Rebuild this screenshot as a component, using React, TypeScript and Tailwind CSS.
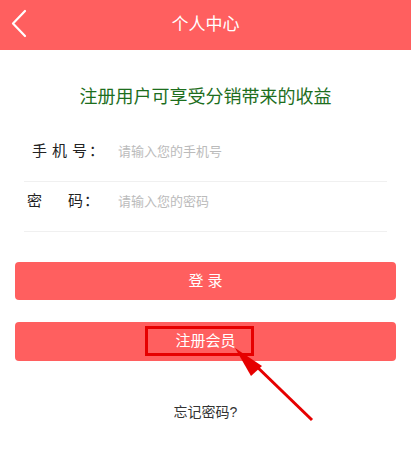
const font = {
  fontFamily: '"Liberation Sans", "Noto Sans CJK SC", sans-serif',
};

export default function App() {
  return (
    <div
      className="relative w-[411px] h-[460px] bg-white overflow-hidden"
      style={font}
    >
      {/* Header */}
      <header className="relative h-[50px] bg-[#ff5f5f] flex items-center justify-center">
        <svg
          className="absolute left-0 top-0"
          width="40"
          height="50"
          viewBox="0 0 40 50"
          fill="none"
        >
          <polyline
            points="25,11 13,23.5 25,36"
            stroke="white"
            strokeWidth="2.2"
            strokeLinecap="round"
            strokeLinejoin="round"
          />
        </svg>
        <h1 className="text-white text-[17px]">个人中心</h1>
      </header>

      {/* Subtitle */}
      <p className="mt-[36px] text-center text-[18px] leading-[22px] text-[#1d6e1d]">
        注册用户可享受分销带来的收益
      </p>

      {/* Form */}
      <div className="mt-[24px] mx-[24px]">
        <div className="h-[50px] flex items-center pb-[10px] border-b border-[#f0f0f0]">
          <div className="w-[94px] flex text-[15px] text-[#222] pl-[8px]">
            <span className="w-[20px]">手</span>
            <span className="w-[20px]">机</span>
            <span className="w-[17px]">号</span>
            <span>：</span>
          </div>
          <span className="text-[13px] text-[#bbb]">请输入您的手机号</span>
        </div>
        <div className="h-[50px] flex items-center pb-[10px] border-b border-[#f0f0f0]">
          <div className="w-[94px] flex text-[15px] text-[#222] pl-[3px]">
            <span className="w-[41px]">密</span>
            <span className="w-[16px]">码</span>
            <span>：</span>
          </div>
          <span className="text-[13px] text-[#bbb]">请输入您的密码</span>
        </div>
      </div>

      {/* Buttons */}
      <div className="mt-[30px] mx-[15px] flex flex-col gap-[22px]">
        <button className="h-[38px] rounded-[4px] bg-[#ff5f5f] text-white text-[15px]">
          登 录
        </button>
        <button className="relative h-[39px] rounded-[4px] bg-[#ff5f5f] text-white text-[15px]">
          注册会员
          <span className="absolute left-[130px] top-[4px] w-[109px] h-[30px] border-[3px] border-[#e60000]" />
        </button>
      </div>

      <p className="mt-[42px] text-center text-[14px] leading-[18px] text-[#333]">
        忘记密码?
      </p>

      {/* Annotation arrow */}
      <svg
        className="absolute left-0 top-0 pointer-events-none"
        width="411"
        height="460"
        viewBox="0 0 411 460"
      >
        <line
          x1="312"
          y1="420"
          x2="252"
          y2="362"
          stroke="#e60000"
          strokeWidth="3"
        />
        <polygon points="235,348 262,366 251,376" fill="#e60000" />
      </svg>
    </div>
  );
}
